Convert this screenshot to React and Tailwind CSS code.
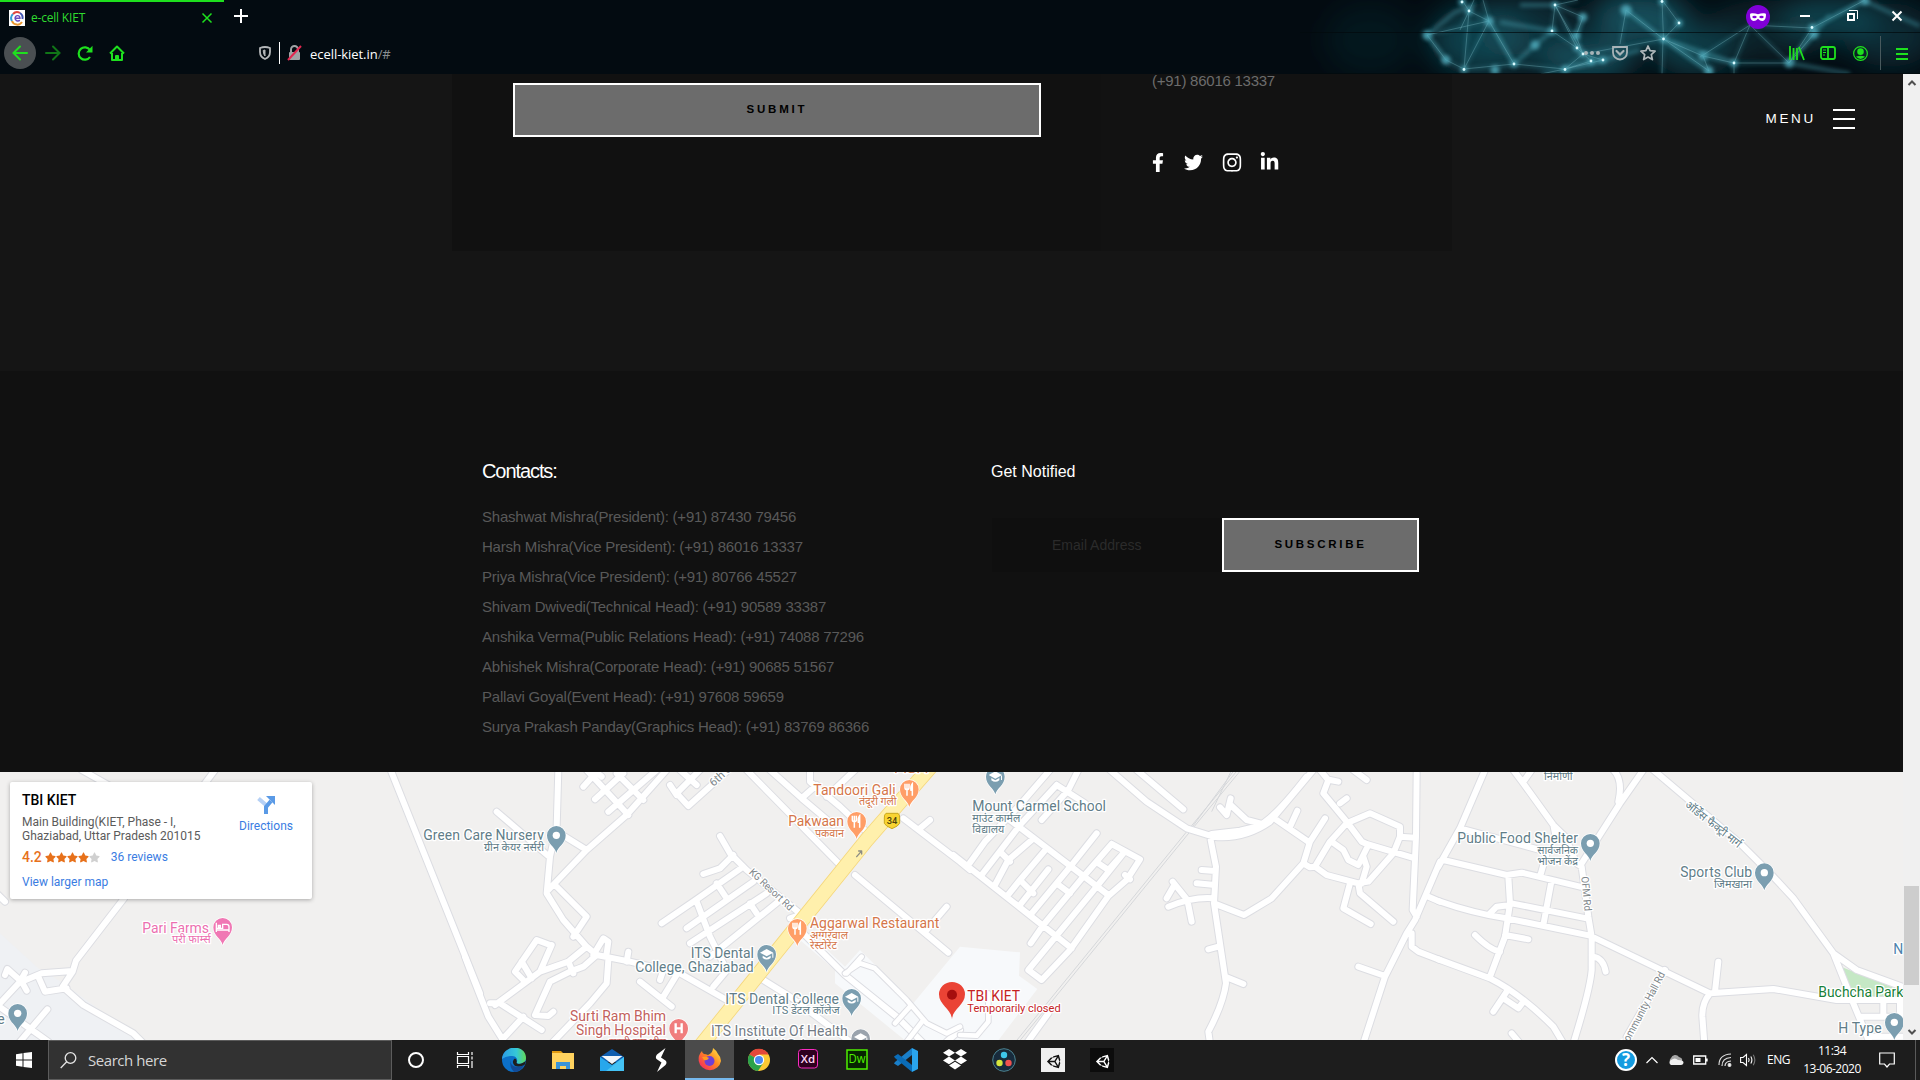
import React from "react";
import { FaFacebookF, FaTwitter, FaInstagram, FaLinkedinIn, FaUnity, FaStar } from "react-icons/fa";

/* ---------- Browser chrome ---------- */

const NODES = [
  [62, 2, 2], [69, 11, 2], [89, 21, 3], [27, 35, 3], [46, 60, 3], [64, 69.5, 2], [114, 64, 2], [95, 70, 3], [155, 5, 2],
  [152, 31, 2.4], [177, 48, 2], [183, 54, 2], [191, 61, 2], [165, 69.5, 2.4], [203, 60, 2], [226, 10, 4], [262, 1.5, 2], [279, 23, 2],
  [263.5, 39, 2], [309, 71, 3], [303, 56, 3], [334, 63, 2.2], [389, 63, 3], [412, 27.5, 2], [414, 34, 3], [465, 1, 2.8], [135, 45, 3], [183, 17, 2.8], [176, 36, 2.8],
];
const LINES =
  "M62 0L69 11L64 69M83 0L89 21L27 35L46 60L64 69L89 21L114 64M69 11L89 21M114 64L64 69M114 64L165 69L203 60M155 5L178 0M155 5L177 48L183 54L203 60M155 5L183 54M152 31L177 48L191 61L165 69M152 31L155 5M176 36L183 54M262 0L263.5 39L226 10L220 44M263.5 39L279 23L262 0M263.5 39L183 54M263.5 39L309 71L303 56L334 63L389 63L412 28L350 25L300 57M334 63L350 25L389 63M334 63L334 74M412 28L465 0M263.5 39L303 56M183 54L165 69M165 69L141 74M69 11L60 30M69 11L74 0M155 5L183 17L176 36M263 39L262 74M389 63L414 34";
const GLOW_LINES =
  "M27 35L55 12L75 5M46 60L27 35M89 21L114 64M100 22L152 31M114 64L135 45L152 31M263.5 39L309 71M263.5 39L334 63M412 28L465 0M389 63L414 34L430 15M465 1L520 26M389 63L450 74M226 10L263 39M165 69L203 60L240 50M120 5L155 5M183 17L176 36";

function NetworkTheme() {
  return (
    <svg className="absolute right-0 top-0 h-[74px] w-[620px]" viewBox="-100 0 620 74" preserveAspectRatio="none">
      <defs>
        <filter id="b1" x="-100%" y="-100%" width="300%" height="300%"><feGaussianBlur stdDeviation="14" /></filter>
        <filter id="b2" x="-50%" y="-50%" width="200%" height="200%"><feGaussianBlur stdDeviation="2.2" /></filter>
      </defs>
      <g filter="url(#b1)" fill="#175a68">
        <ellipse cx="80" cy="40" rx="50" ry="36" opacity=".65" />
        <ellipse cx="130" cy="30" rx="50" ry="36" opacity=".4" />
        <ellipse cx="185" cy="60" rx="50" ry="20" opacity=".85" />
        <ellipse cx="240" cy="18" rx="50" ry="26" opacity=".85" />
        <ellipse cx="295" cy="50" rx="40" ry="26" opacity=".6" />
        <ellipse cx="365" cy="30" rx="60" ry="30" opacity=".3" />
        <ellipse cx="430" cy="18" rx="50" ry="22" opacity=".65" />
        <ellipse cx="490" cy="35" rx="45" ry="32" opacity=".4" />
        <ellipse cx="-30" cy="40" rx="45" ry="36" opacity=".15" />
      </g>
      <path d={LINES} fill="none" stroke="#3d95a5" strokeWidth="3" opacity=".35" filter="url(#b2)" />
      <path d={GLOW_LINES} fill="none" stroke="#4aa6b6" strokeWidth="4" opacity=".45" filter="url(#b2)" />
      <path d={LINES} fill="none" stroke="#8fd0da" strokeWidth=".6" opacity=".5" />
      <g fill="#4fa9ba" filter="url(#b2)" opacity=".85">
        {NODES.map(([x, y, r], i) => <circle key={i} cx={x} cy={y} r={r + 1.5} />)}
      </g>
      <g fill="#d9fbff">
        {NODES.filter((n) => n[2] < 2.6).map(([x, y], i) => <circle key={i} cx={x} cy={y} r="1.4" />)}
      </g>
      <path d="M-100 32.5H520M-100 73.5H520" stroke="#020a0d" opacity=".7" />
    </svg>
  );
}

function TabStrip() {
  return (
    <div className="relative flex h-8 items-stretch">
      <div className="flex w-56 items-center border-t-2 border-[#1ee01e] pb-px pl-[9px] pr-[11px]">
        <svg className="mt-[3px] h-4 w-4 bg-white" viewBox="0 0 16 16" fill="none" strokeWidth="2">
          <path d="M3 11A5.6 5.6 0 0 1 4 4" stroke="#2f9fd8" />
          <path d="M4 4A5.6 5.6 0 0 1 11 3" stroke="#e0463c" />
          <path d="M11 3A5.6 5.6 0 0 1 13.4 9" stroke="#3f54b5" />
          <path d="M3 11A5.6 5.6 0 0 0 13 12" stroke="#e8962e" />
          <path d="M6 8.200h5C11 5 6.600 4.500 6 8C6 11 9 11.500 11 10.400" stroke="#6a4cc0" strokeWidth="1.400" />
        </svg>
        <span className="ml-[6px] mt-[2px] flex-1 font-['Open_Sans',sans-serif] text-[12px] tracking-[-0.2px] text-[#2fdc2f]">e-cell KIET</span>
        <svg className="mt-[2px] h-3 w-3" viewBox="0 0 12 12" stroke="#1ee01e" strokeWidth="1.500"><path d="M1.500 1.500l9 9M10.500 1.500l-9 9" /></svg>
      </div>
      <div className="flex w-[34px] items-center justify-center">
        <svg className="h-[14px] w-[14px]" viewBox="0 0 14 14" stroke="#fff" strokeWidth="2"><path d="M7 0v14M0 7h14" /></svg>
      </div>
      <div className="flex-1" />
      <div className="flex items-center">
        <svg className="mt-[2px] h-6 w-6" viewBox="0 0 24 24">
          <circle cx="12" cy="12" r="12" fill="#8000d7" />
          <path d="M4 9.500Q4 8.300 6 8.200Q9 8 12 9.300Q15 8 18 8.200Q20 8.300 20 9.500Q20 16 16.300 16Q14 16 12 13.800Q10 16 7.700 16Q4 16 4 9.500Z" fill="#fff" />
          <ellipse cx="8.500" cy="12" rx="2.200" ry="1.300" fill="#8000d7" /><ellipse cx="15.500" cy="12" rx="2.200" ry="1.300" fill="#8000d7" />
        </svg>
        <div className="flex w-[70px] justify-center"><div className="h-[2px] w-[10px] bg-white" /></div>
        <svg className="ml-[6px] h-3 w-3" viewBox="0 0 12 12" fill="none" stroke="#fff"><path d="M3 .5H11.500V9" /><path d="M2 4h6v6H2z" strokeWidth="2" /></svg>
        <svg className="ml-[33px] mr-[17px] h-3 w-3" viewBox="0 0 12 12" stroke="#fff" strokeWidth="2"><path d="M1.500 1.500l9 9M10.500 1.500l-9 9" /></svg>
      </div>
    </div>
  );
}

function NavBar() {
  const g = "#1ee01e";
  return (
    <div className="relative flex h-[42px] items-center">
      <div className="ml-1 flex h-8 w-8 items-center justify-center rounded-full bg-[#4a4f52]">
        <svg className="h-4 w-4" viewBox="0 0 16 16" fill="none" stroke={g} strokeWidth="2" strokeLinecap="round"><path d="M15 8H1.500M8 1.500L1.500 8L8 14.500" /></svg>
      </div>
      <svg className="ml-[9px] h-4 w-4 opacity-50" viewBox="0 0 16 16" fill="none" stroke={g} strokeWidth="2" strokeLinecap="round"><path d="M1 8h13.500M8 1.500L14.500 8L8 14.500" /></svg>
      <svg className="ml-4 h-4 w-4" viewBox="0 0 16 16" fill="none" stroke={g} strokeWidth="2.200"><path d="M13 12A6.200 6.200 0 1 1 13 5" /><path d="M15.500 .8V7.500H9z" fill={g} stroke="none" /></svg>
      <svg className="ml-4 h-4 w-4" viewBox="0 0 16 16" fill="none" stroke={g} strokeWidth="2" strokeLinejoin="round"><path d="M1 8.500L8 1.500L15 8.500M3 8v7h10V8" /><path d="M7 15v-4h2v4z" /></svg>
      <svg className="ml-[134px] h-[14px] w-3" viewBox="0 0 12 14" fill="none" stroke="#b4b7b9" strokeWidth="1.800"><path d="M1 2Q6 0 11 2V6Q11 11 6 13Q1 11 1 6Z" /><path d="M6 4v6Q4.200 8 4.200 4.500Z" fill="#b4b7b9" strokeWidth="1" /></svg>
      <div className="ml-[8px] h-[22px] w-px bg-white" />
      <svg className="ml-[7px] h-4 w-[15px]" viewBox="0 0 15 16"><path d="M4 8V4.500a3.500 3.500 0 0 1 7 0V8" fill="none" stroke="#a0a3a5" strokeWidth="2" /><rect x="2" y="7" width="11" height="8" rx="1" fill="#a0a3a5" /><path d="M1 15L14 1" stroke="#e22850" strokeWidth="2" /></svg>
      <span className="ml-[8px] mt-[3px] font-['Open_Sans',sans-serif] text-[13px] tracking-[-0.05px] text-white">ecell-kiet.in<span className="text-[#8a8f91]">/#</span></span>
      <div className="flex-1" />
      <svg className="h-4 w-[18px]" viewBox="0 0 18 16" fill="#a8b4b8"><circle cx="3" cy="8" r="2" /><circle cx="9" cy="8" r="2" /><circle cx="15" cy="8" r="2" /></svg>
      <svg className="ml-[11px] h-4 w-4" viewBox="0 0 16 16" fill="none" stroke="#a8b4b8" strokeWidth="1.800"><path d="M1 2h14v5.500a7 7 0 0 1-14 0z" /><path d="M4.500 6L8 9.500L11.500 6" strokeWidth="2.200" strokeLinecap="round" /></svg>
      <svg className="ml-3 h-4 w-4" viewBox="0 0 16 16" fill="none" stroke="#b0b8bb" strokeWidth="1.700" strokeLinejoin="round"><path d="M8 1l2.100 4.700 5 .5-3.800 3.400 1.100 5L8 12.100l-4.400 2.500 1.100-5L.9 6.200l5-.5z" /></svg>
      <svg className="ml-[133px] h-4 w-4" viewBox="0 0 16 16" stroke={g} strokeWidth="1.800"><path d="M1 1v14M4.500 3v12M8 3v12M10 2l5 13" /></svg>
      <svg className="ml-[15px] h-4 w-4" viewBox="0 0 16 16" fill="none" stroke={g} strokeWidth="1.800"><rect x="1" y="2" width="14" height="12" rx="2" /><path d="M8 2v12" /><path d="M3 5h3M3 7.500h3M3 10h2" strokeWidth="1" /></svg>
      <svg className="ml-[17px] h-[15px] w-[15px]" viewBox="0 0 16 16"><circle cx="8" cy="8" r="7.300" fill="none" stroke={g} strokeWidth="1.300" /><circle cx="8" cy="6" r="3.500" fill={g} /><path d="M3 11.500Q8 9.500 13 11.500Q8 16 3 11.500Z" fill={g} /></svg>
      <div className="ml-[12px] h-[34px] w-px bg-[#48595d]" />
      <svg className="ml-[15px] mr-[12px] h-[13px] w-[12px]" viewBox="0 0 12 13" stroke={g} strokeWidth="2"><path d="M0 2h12M0 7h12M0 12h12" /></svg>
    </div>
  );
}

/* ---------- Page ---------- */

function ContactCard() {
  return (
    <section className="relative h-[297px] bg-[#151515]">
      <div className="ml-[452px] flex h-[177px] w-[1000px] overflow-hidden font-['Liberation_Sans',Arial,sans-serif]">
        <div className="w-[649px] bg-[#111111] pl-[61px] pt-[9px]">
          <button className="block h-[54px] w-[528px] border-2 border-white bg-[#6c6c6c] text-center text-[11.5px] font-bold tracking-[2.8px] text-black">SUBMIT</button>
        </div>
        <div className="flex-1 bg-[#121212] pl-[51px]">
          <p className="-mt-[8px] text-[15px] leading-[30px] tracking-[-0.25px] text-[#6c6c6c]">(+91) 86016 13337</p>
          <div className="mt-[56px] flex h-[20px] items-center text-white">
            <FaFacebookF className="h-[19px] w-[12px]" />
            <FaTwitter className="ml-[20px] h-[19px] w-[19px]" />
            <FaInstagram className="ml-[19px] h-[21px] w-[20px]" />
            <FaLinkedinIn className="ml-[18px] h-[20px] w-[19px]" />
          </div>
        </div>
      </div>
      <div className="absolute right-[48px] top-[35px] flex items-center gap-[17px]">
        <span className="font-['Liberation_Sans',Arial,sans-serif] text-[13.500px] leading-[20px] tracking-[2.700px] text-white">MENU</span>
        <div className="flex flex-col gap-[7px]"><i className="h-[2px] w-[22px] bg-white" /><i className="h-[2px] w-[22px] bg-white" /><i className="h-[2px] w-[22px] bg-white" /></div>
      </div>
    </section>
  );
}

const CONTACTS = [
  "Shashwat Mishra(President): (+91) 87430 79456",
  "Harsh Mishra(Vice President): (+91) 86016 13337",
  "Priya Mishra(Vice President): (+91) 80766 45527",
  "Shivam Dwivedi(Technical Head): (+91) 90589 33387",
  "Anshika Verma(Public Relations Head): (+91) 74088 77296",
  "Abhishek Mishra(Corporate Head): (+91) 90685 51567",
  "Pallavi Goyal(Event Head): (+91) 97608 59659",
  "Surya Prakash Panday(Graphics Head): (+91) 83769 86366",
];

function Footer() {
  return (
    <footer className="flex h-[401px] bg-[#111111] pl-[482px] pt-[85px] font-['Liberation_Sans',Arial,sans-serif]">
      <div className="w-[509px]">
        <h3 className="text-[20px] leading-[30px] tracking-[-1.080px] text-white">Contacts:</h3>
        <ul className="mt-[16px] text-[15px] leading-[30px] tracking-[-0.22px] text-[#595959]">
          {CONTACTS.map((c) => <li key={c}>{c}</li>)}
        </ul>
      </div>
      <div>
        <h4 className="pt-px text-[16px] leading-[30px] text-white">Get Notified</h4>
        <div className="mt-[31px] flex pl-px">
          <div className="h-[54px] w-[230px] bg-[#0f0f0f] pl-[60px] text-[14px] leading-[54px] text-[#2b2b2b]">Email Address</div>
          <button className="h-[54px] w-[197px] border-2 border-white bg-[#6c6c6c] text-[11.5px] font-bold tracking-[2.700px] text-black">SUBSCRIBE</button>
        </div>
      </div>
    </footer>
  );
}

/* ---------- Map (road geometry is in 1/3 px units, one list per 480px tile) ---------- */

const ROADS = [
  "M245 0L325 45M645 0L600 60M-10 370L15 395M372 385L228 572L218 605L188 650L250 705L400 790L430 820M65 635L125 610L218 603M115 620L135 665L200 655M15 615L22 597L65 635L80 662M75 608L60 635L0 700M-5 708L145 815M142 718L60 815M1172 0L1440 670",
  "M-45 560L-30 600L25 740L75 820M235 0L230 170L210 260L200 370L250 450L320 530L350 555L450 575L600 610L740 690M50 125L205 258M255 200L320 240M560 0L440 135L320 240L205 360M225 345L320 440L280 500M250 450L320 530M320 0L445 135M310 50L355 0M345 88L430 10M385 125L530 0M410 10L490 90M365 20L335 -5M590 70L625 108L745 0M590 70L660 0M570 45L590 75M600 0L650 45M800 0L1085 290M1125 315L1405 548M1340 480L1400 410M870 0L965 85L1060 165M990 0L990 35L1080 110L1165 190M965 85L1010 45M1040 80L1125 0M1270 145L1440 275L1470 300M1320 175L1350 150M720 198L750 250L800 300L960 430M930 445L960 435M970 490L1095 615L1250 740L1330 820M760 255L720 295L670 312M545 460L640 395L790 290M620 475L820 335M630 520L860 370M690 560L895 395M650 395L690 500L735 590M710 340L740 385M810 400L830 430M480 635L575 710M550 680L590 615M540 630L550 600M445 545L440 575M850 630L930 680L1050 770L1110 815M700 650L750 590M350 555L310 590L270 605L210 635L165 735L205 738L220 725M320 530L265 575L180 605L45 705M210 525L170 510L105 605L130 630M125 575L155 625M180 605L215 525M265 575L280 610M340 555L370 505L385 515L380 550M385 570L380 640L330 700L220 815M30 700L60 700L185 780M130 740L70 805M1400 815L1440 780",
  "M-20 255L335 535M270 0L175 110L75 215L25 285M355 0L325 60L245 150M290 45L180 165L65 315M290 45L375 100M150 150L445 375M215 210L145 270L105 345M120 245L150 275M260 235L180 330L140 380M265 298L180 405M180 330L220 370M410 190L335 285L215 430M290 340L330 370M455 222L370 320L250 465L212 520M455 222L540 268L500 330L445 378L330 540L245 630L205 600L410 350L490 250M490 250L445 300L415 280M510 328L495 315M450 0L560 95L680 175L760 200Q850 210 930 155L1060 0M755 192L840 182L890 170Q940 150 1040 20M530 0L670 118M780 112L800 135L812 85M812 105L860 150L900 160M752 210L768 290L762 400L780 520L798 640Q790 700 745 785L750 820M725 300L765 303M710 340L765 345M625 410Q700 380 760 385M620 385L640 350M638 335L682 390L695 455M762 400L852 435L935 385L1030 280L1050 215L1095 145M950 150L1045 215M990 170L1012 122M1030 280L1050 292L1065 290L1110 215L1160 160L1230 130L1320 170L1320 200L1365 203M1320 200L1300 250L1225 335L1195 340L1100 315L1065 290M1195 340L1200 370L1300 455M1170 340L1150 415L1232 462M1080 0L1105 30L1090 70L1160 155L1205 215L1220 222L1365 265M1110 30L1135 35M1140 100L1160 85M1115 215L1150 240L1165 270L1195 285L1225 225L1205 215M1210 260L1220 290L1205 340M1370 10L1368 200L1358 420L1370 440M1440 275L1365 450L1340 490L1275 620L1210 820M1355 490L1355 530L1375 545L1440 570M1405 380L1440 395M1195 590L1275 618M745 538L775 530M800 622L850 642M1180 0L1220 30M200 820L265 730",
  "M135 0L60 175L-5 290M60 175L300 240M10 270L200 315L245 308L420 350M220 0L250 40L340 165L375 200L410 280L425 290L445 440L455 500L455 600Q450 660 400 820M275 0L250 35M340 165L345 190M320 250L300 320M335 330L310 465M205 320L210 400L195 500L150 620M-5 393Q100 430 200 445L450 497L810 670L1000 657L1190 690L1390 690M150 430L170 410L210 405M215 400L440 445M105 495Q150 540 180 545M195 495L265 508M-5 568L150 625Q240 670 340 770L370 820M200 665L160 725M190 685L235 715L250 695M215 790L240 820M460 560Q490 565 497 605M610 0L540 100L425 280M520 0Q550 30 535 95M640 0L900 220L1000 320L1060 385L1180 550L1250 600L1400 655M1180 550L1240 700L1290 820M835 575L825 665M810 670Q785 700 787 740L793 820M1260 740L1400 740M1330 700V740M1380 700V740M1285 800H1400M675 600L560 800",
];
const CAMPUS_ROADS = "M1095 610L1140 580L1185 595L1280 690L1340 760L1400 790L1440 770M1440 795L1490 797L1525 755L1525 670M1290 710L1245 760M1330 750L1280 815M1145 560L1100 610";

function Tile({ i, children }) {
  return <g transform={`translate(${480 * i} -2) scale(.33333)`}>{children}</g>;
}

const C = { label: "#617d88", road: "#7d8589", food: "#d5764a", pink: "#ec6fb0", red: "#c2615c", inst: "#737b85" };

function Label({ x, y, w, c = C.label, s = 42, rotate, children }) {
  return (
    <text x={x} y={y + 1} fill={c} fontSize={s} textLength={w} lengthAdjust={s < 40 ? "spacingAndGlyphs" : "spacing"}
      transform={rotate ? `rotate(${rotate} ${x} ${y})` : undefined}
      stroke="#fff" strokeWidth="8" strokeLinejoin="round" paintOrder="stroke">{children}</text>
  );
}

function Pin({ x, y, c = "#7b9eb0", kind = "dot" }) {
  return (
    <g transform={`translate(${x} ${y})`}>
      <path d="M0 27C-4 8-28 0-28-26A28 28 0 0 1 28-26C28 0 4 8 0 27Z" fill={c} stroke="#fff" strokeWidth="4" paintOrder="stroke" transform="translate(0 26)" />
      {kind === "dot" && <circle r="11" fill="#fff" />}
      {kind === "food" && <path d="M-13-17V-5Q-13 1-7 1V19M-7-17V0M-1-17V-5Q-1 1-7 1M9 19V-17Q3-10 5 3H9" fill="none" stroke="#fff" strokeWidth="4.500" />}
      {kind === "school" && <path d="M0-16L20-5L0 6L-20-5ZM-12 4V11Q0 20 12 11V4L0 11ZM17-3H20V10H17Z" fill="#fff" />}
      {kind === "bed" && <path d="M-19-14V14M-19 8H19M19 14V-2Q19-9 12-9H0V3H-19M-13-6h6v5h-6z" fill="none" stroke="#fff" strokeWidth="4" />}
      {kind === "h" && <path d="M-9-15V15M9-15V15M-9 0H9" stroke="#fff" strokeWidth="7" />}
    </g>
  );
}

function MapCard() {
  return (
    <div className="absolute left-[10px] top-[10px] flex h-[117px] w-[302px] rounded-[2px] bg-white pl-3 pt-[9px] font-[Roboto,sans-serif] text-[12px] text-[#5b5b5b] shadow-[0_1px_4px_rgba(0,0,0,0.3)]">
      <div className="w-[217px]">
        <div className="text-[14px] font-medium leading-[18px] text-black">TBI KIET</div>
        <div className="mt-[6px] leading-[14px]">Main Building(KIET, Phase - I,<br />Ghaziabad, Uttar Pradesh 201015</div>
        <div className="mt-[6px] flex items-center leading-[16px]">
          <span className="text-[14px] font-medium text-[#e7711b]">4.2</span>
          <span className="ml-[3px] flex text-[11px] text-[#e7711b]"><FaStar /><FaStar /><FaStar /><FaStar /><FaStar className="text-[#d0d0d0]" /></span>
          <span className="ml-[11px] text-[#3a7ce2]">36 reviews</span>
        </div>
        <div className="mt-[9px] leading-[16px] text-[#3a7ce2]">View larger map</div>
      </div>
      <div className="flex w-[54px] flex-col items-center">
        <svg className="mt-[5px] h-[18px] w-[18px]" viewBox="0 0 18 18" fill="none"><path d="M1.500 2.500L9 9" stroke="#b5d0f5" strokeWidth="4" /><path d="M9 18V11L14 5" stroke="#5a9ae6" strokeWidth="4" /><path d="M9 0h9v9z" fill="#5a9ae6" /></svg>
        <span className="mt-[4px] leading-[16px] text-[#3a7ce2]">Directions</span>
      </div>
    </div>
  );
}

function MapView() {
  return (
    <section className="relative h-[268px] overflow-hidden bg-[#f1f0ef]">
      <svg className="block h-[268px] w-[1903px] font-[Roboto,'Noto_Sans',sans-serif]" viewBox="0 0 1903 268">
        <Tile i={0}><path d="M0 490L115 595L190 640L430 815H0Z" fill="#eff1f4" /></Tile>
        <Tile i={1}><path d="M960 510L1065 600V640L1280 815H1552L1672 657L1617 617L1620 547L1440 530L1300 700L1140 540L1095 590L1000 500Z" fill="#f7f9fb" /></Tile>
        <Tile i={3}><path d="M1203 590L1390 665V690H1240Z" fill="#c5e8c5" /></Tile>
        <Tile i={2}><path d="M833 0L680 185L167 815M843 0L690 185L177 815M815 0L755 125M823 0L690 180" stroke="#d5d7da" strokeWidth="3" fill="none" /></Tile>
        <g fill="none" strokeLinejoin="round" strokeLinecap="round">
          <g stroke="#dcdde2" strokeWidth="24">{ROADS.map((d, i) => <Tile key={i} i={i}><path d={d} /></Tile>)}</g>
          <g stroke="#fff" strokeWidth="18">{ROADS.map((d, i) => <Tile key={i} i={i}><path d={d} /></Tile>)}</g>
          <Tile i={1}>
            <path d={CAMPUS_ROADS} stroke="#dcdde2" strokeWidth="20" /><path d={CAMPUS_ROADS} stroke="#fff" strokeWidth="14" />
            <path d="M1352 -10L1160 210L660 830" stroke="#f5d77c" strokeWidth="46" /><path d="M1352 -10L1160 210L660 830" stroke="#fff0ac" strokeWidth="41" />
            <path d="M1130 260L1144 244M1136 243H1145V252" stroke="#8c8c84" strokeWidth="4" />
          </Tile>
        </g>
        <Tile i={0}>
          <Label x={427} y={487} w={200} c={C.pink}>Pari Farms</Label><Label x={516} y={517} w={116} s={32} c={C.pink}>परी फार्म्स</Label>
          <Pin x={668} y={472} c="#f078b4" kind="bed" />
          <Label x={-8} y={760}>e</Label><Pin x={53} y={730} />
          <Label x={1270} y={208} w={362}>Green Care Nursery</Label><Label x={1452} y={241} w={180} s={32}>ग्रीन केयर नर्सरी</Label>
        </Tile>
        <Tile i={1}>
          <Pin x={229} y={196} />
          <Label x={700} y={50} s={34} rotate={-42} c={C.road}>6th St</Label>
          <Label x={1242} y={8} w={104} s={32} c={C.food}>मिष्ठान</Label>
          <Label x={1000} y={73} w={247} c={C.food}>Tandoori Gali</Label><Label x={1137} y={104} w={113} s={32} c={C.food}>तंदूरी गली</Label>
          <Pin x={1288} y={58} c="#ff9e67" kind="food" />
          <Label x={925} y={166} w={167} c={C.food}>Pakwaan</Label><Label x={1005} y={199} w={87} s={32} c={C.food}>पकवान</Label>
          <Pin x={1130} y={154} c="#ff9e67" kind="food" />
          <path d="M1218 130H1254Q1260 134 1259 144V160Q1256 168 1236 176Q1216 168 1213 160V144Q1212 134 1218 130Z" fill="#f9d432" stroke="#c9a71c" strokeWidth="3" />
          <text x="1236" y="163" fontSize="28" fontWeight="500" textAnchor="middle" fill="#50440c">34</text>
          <Label x={806} y={308} w={168} s={31} rotate={43} c={C.road}>KG Resort Rd</Label>
          <Label x={990} y={472} w={388} c={C.food}>Aggarwal Restaurant</Label><Label x={990} y={505} w={114} s={32} c={C.food}>अग्गरवाल</Label><Label x={990} y={537} w={81} s={32} c={C.food}>रेस्टोरेंट</Label>
          <Pin x={952} y={475} c="#ff9e67" kind="food" />
          <Label x={632} y={562} w={190}>ITS Dental</Label><Label x={466} y={604} w={355}>College, Ghaziabad</Label><Pin x={860} y={553} kind="school" />
          <Label x={736} y={700} w={341}>ITS Dental College</Label><Label x={877} y={731} w={202} s={32}>ITS डेंटल कॉलेज</Label><Pin x={1115} y={685} kind="school" />
          <Label x={270} y={751} w={288} c={C.red}>Surti Ram Bhim</Label><Label x={288} y={793} w={270} c={C.red}>Singh Hospital</Label><Label x={388} y={826} w={170} s={32} c={C.red}>सुरती राम भीम</Label>
          <Pin x={596} y={775} c="#f07d7d" kind="h" />
          <Label x={693} y={796} w={410} c={C.inst}>ITS Institute Of Health</Label><Label x={785} y={838} w={232} c={C.inst}>&amp; Allied Scien</Label>
          <Pin x={1142} y={806} c="#9aa3ad" kind="school" />
          <path d="M1416 748C1414 716 1377 706 1377 673A39 37 0 0 1 1455 673C1455 706 1418 716 1416 748Z" fill="#ea4335" /><circle cx="1416" cy="674" r="15" fill="#a50e0e" />
        </Tile>
        <Tile i={2}>
          <Pin x={106} y={20} kind="school" />
          <Label x={37} y={121} w={401}>Mount Carmel School</Label><Label x={37} y={155} w={144} s={32}>माउंट कार्मल</Label><Label x={37} y={187} w={96} s={32}>विद्यालय</Label>
          <Label x={22} y={693} w={158} c="#c5221f">TBI KIET</Label><Label x={22} y={725} w={280} s={34} c="#c5221f">Temporarily closed</Label>
        </Tile>
        <Tile i={3}>
          <Label x={312} y={30} w={86} s={32}>निर्माणी</Label>
          <Label x={52} y={217} w={362}>Public Food Shelter</Label><Label x={292} y={250} w={122} s={32}>सार्वजनिक</Label><Label x={292} y={283} w={122} s={32}>भोजन केंद्र</Label><Pin x={451} y={220} />
          <Label x={425} y={320} w={104} s={31} rotate={85} c={C.road}>OFM Rd</Label>
          <Label x={733} y={108} w={205} s={34} rotate={38}>ऑर्डेंस फैक्ट्री मार्ग</Label>
          <Label x={721} y={321} w={215}>Sports Club</Label><Label x={822} y={352} w={114} s={32}>जिमखाना</Label><Pin x={973} y={308} />
          <Label x={558} y={833} w={250} s={32} rotate={-62} c={C.road}>Community Hall Rd</Label>
          <Label x={1360} y={552} c="#4d83ad">N</Label><Label x={1135} y={679} w={255} c="#188038">Buchcha Park</Label>
          <Label x={1195} y={787} w={130}>H Type</Label><Pin x={1363} y={757} />
        </Tile>
      </svg>
      <MapCard />
    </section>
  );
}

function Scrollbar() {
  return (
    <div className="flex w-[17px] flex-col items-center bg-[#f0f0f0]">
      <svg className="mt-[4px] h-[10px] w-[10px]" viewBox="0 0 10 10" fill="none" stroke="#505050" strokeWidth="2"><path d="M1.500 7L5 3.500L8.500 7" /></svg>
      <div className="mt-[798px] h-[99px] w-[15px] bg-[#cdcdcd]" />
      <svg className="mt-[42px] h-[10px] w-[10px]" viewBox="0 0 10 10" fill="none" stroke="#505050" strokeWidth="2"><path d="M1.500 3L5 6.500L8.500 3" /></svg>
    </div>
  );
}

/* ---------- Taskbar ---------- */

const APPS = [
  { id: "cortana", art: <circle cx="12" cy="12" r="7" fill="none" stroke="#fff" strokeWidth="2" /> },
  { id: "taskview", art: <path d="M4.500 4v2.500h11V4M4.500 20v-2.500h11V20M4.500 8.500h11v7h-11zM19 4v3M19 13v7M19 8.500v3" fill="none" stroke="#fff" strokeWidth="1.200" /> },
  { id: "edge", art: <g><defs><linearGradient id="eg" x1="0" x2="1"><stop offset="0" stopColor="#2b9be6" /><stop offset=".6" stopColor="#35c8d8" /><stop offset="1" stopColor="#62d957" /></linearGradient></defs><circle cx="12" cy="12" r="12" fill="#0c70c8" /><path d="M0 11C1-4 24-4 24 10C24 15 18 17 14.500 15C16 13 15.500 8.500 10.500 8Q4 7.500 0 11Z" fill="url(#eg)" /><path d="M8.500 12Q8 18 15 19Q19 19 22 17Q19 24 12 24Q7 19 8.500 12Z" fill="#124a96" /><path d="M14.500 15Q17 17.500 24 13L22.500 17Q13 21 11 15Q10.500 12 13 10.500Q15.500 12 14.500 15Z" fill="#1e1e1e" /></g> },
  { id: "explorer", art: <g><path d="M1 3h9l2 2H1z" fill="#e09a12" /><path d="M1 5h22v16H1z" fill="#ffd25e" /><path d="M5 21v-7h14v7h-4v-3H9v3z" fill="#3a94d8" /></g> },
  { id: "mail", art: <g><path d="M0 9L12 1L24 9V14H0z" fill="#0f5eb0" /><path d="M1.500 8h21L12 16z" fill="#f2f6fa" /><path d="M0 9L12 17L24 9V23H0z" fill="#27a7ec" /><path d="M24 9V23H6z" fill="#45c3f5" /></g> },
  { id: "strike", art: <path d="M16.500 0L8 6.500Q6 9 7.500 11L12.500 14.500L8 24L16.500 17Q18.500 14.500 16.500 12.500L12 9.500Z" fill="#fff" /> },
  { id: "firefox", active: true, art: <g><defs><linearGradient id="fx" x1="1" x2="0" y1="0" y2="1"><stop offset="0" stopColor="#fff14f" /><stop offset=".45" stopColor="#ff8a1f" /><stop offset="1" stopColor="#f5156c" /></linearGradient></defs><path d="M15 0Q19 3 20 6Q23 9 23 13A11.300 11 0 0 1 .7 13Q0 7 4 3Q4 5 6 6Q8 6 10 7Q15 5 15 0Z" fill="url(#fx)" /><circle cx="11.500" cy="13" r="5" fill="#6e3fd6" /><path d="M4 9Q8 8 11 10Q9 13 6 12Z" fill="#ff9a1f" /></g> },
  { id: "chrome", art: <g><circle cx="12" cy="12" r="11" fill="#fcc934" /><path d="M12 12L2.400 6.500A11 11 0 0 1 21.600 6.500H12Z" fill="#e3473b" /><path d="M12 12L2.400 6.500A11 11 0 0 0 11 23L16.500 14.500Z" fill="#2ba24c" /><circle cx="12" cy="12" r="5.200" fill="#fff" /><circle cx="12" cy="12" r="4" fill="#4a8af4" /></g> },
  { id: "xd", art: <g><rect x="2.500" y="1.500" width="19" height="18.500" rx="3" fill="#2e001e" stroke="#f72cc0" /><text x="12" y="15" fontSize="11.500" fontWeight="600" textAnchor="middle" fill="#ffd9f5">Xd</text></g> },
  { id: "dw", art: <g><rect x="2" y="2" width="20" height="19" fill="#072401" stroke="#4ff000" strokeWidth="1.500" /><text x="12" y="14.500" fontSize="12" textLength="17" lengthAdjust="spacingAndGlyphs" textAnchor="middle" fill="#4ff000">Dw</text></g> },
  { id: "vscode", art: <g><path d="M18 0L24 3V21L18 24Z" fill="#2aa5ee" /><path d="M18 0V7L4 18L0 15.500L1 14Z" fill="#1a7fc9" /><path d="M18 24V17L4 6L0 8.500L1 10Z" fill="#0a6cb8" /></g> },
  { id: "dropbox", art: <path d="M6 1L12 4.800L6 8.600L0 4.800ZM18 1L24 4.800L18 8.600L12 4.800ZM6 8.600L12 12.400L6 16.200L0 12.400ZM18 8.600L24 12.400L18 16.200L12 12.400ZM12 13.800L18 17.600L12 21.400L6 17.600Z" fill="#fff" /> },
  { id: "resolve", art: <g><circle cx="12" cy="12" r="11.300" fill="#182b3c" stroke="#4b8391" strokeWidth="1" /><circle cx="12" cy="7" r="3.200" fill="#3ec6ec" /><circle cx="7.500" cy="15" r="3.200" fill="#d5e63c" /><circle cx="16.500" cy="15" r="3.200" fill="#f0524f" /></g> },
  { id: "unity", art: <g><path d="M0 0h24v24H0z" fill="#f0f0f0" /><FaUnity x="5.500" y="5.500" width="13" height="13" color="#111" /></g> },
  { id: "unityhub", art: <g><path d="M0 0h24v24H0z" fill="#0c0c0c" /><FaUnity x="5.500" y="5.500" width="13" height="13" color="#fff" /></g> },
];

function Taskbar() {
  return (
    <div className="flex h-10 items-center bg-[#1d1d1d] font-['Open_Sans',sans-serif] text-white">
      <div className="flex w-12 justify-center">
        <svg className="h-4 w-4" viewBox="0 0 16 16" fill="#fff"><path d="M0 2.200L6.500 1.300V7.500H0zM7.500 1.100L16 0V7.500H7.500zM0 8.500H6.500V14.700L0 13.800zM7.500 8.500H16V16L7.500 14.900z" /></svg>
      </div>
      <div className="flex h-full w-[344px] items-center border border-[#5c5c5c] bg-[#323232] pl-[11px]">
        <svg className="h-[17px] w-[17px]" viewBox="0 0 17 17" fill="none" stroke="#e5e5e5" strokeWidth="1.300"><circle cx="10.500" cy="6" r="5.300" /><path d="M6.700 9.800L.7 16" /></svg>
        <span className="ml-[11px] text-[15px] tracking-[-0.45px] text-[#d6d6d6]">Search here</span>
      </div>
      <div className="-ml-px flex h-full">
        {APPS.map((a) => (
          <div key={a.id} className={a.active ? "flex w-[49px] justify-center border-b-2 border-[#76b9ed] bg-[#4b4b4b] pt-2" : "flex w-[49px] justify-center pt-2"}>
            <svg className="ml-px h-6 w-6" viewBox="0 0 24 24">{a.art}</svg>
          </div>
        ))}
      </div>
      <div className="flex-1" />
      <svg className="h-[22px] w-[22px]" viewBox="0 0 22 22"><circle cx="11" cy="11" r="10" fill="#149be0" stroke="#fff" strokeWidth="2" /><text x="11" y="17" fontSize="17" fontWeight="700" textAnchor="middle" fill="#fff">?</text></svg>
      <svg className="ml-[9px] h-3 w-3" viewBox="0 0 12 12" fill="none" stroke="#fff" strokeWidth="1.200"><path d="M.5 9L6 3.500L11.500 9" /></svg>
      <svg className="ml-[10px] h-4 w-4" viewBox="0 0 16 16"><path d="M4 12A3.500 3.500 0 0 1 3 6A4.500 4.500 0 0 1 11 5Q15 6 14 9Z" fill="#a5a5a5" /><path d="M3 13A2.800 2.800 0 0 1 3 8Q7 5 10 8Q16 8 15.500 11Q15 13 13 13Z" fill="#f0f0f0" /></svg>
      <svg className="ml-[9px] h-3 w-[15px]" viewBox="0 0 15 12"><path d="M.7 2h12v8H.7zM14 4.500v3" fill="none" stroke="#fff" strokeWidth="1.300" /><path d="M2.500 4h5v4h-5z" fill="#fff" /></svg>
      <svg className="ml-[10px] h-4 w-[14px]" viewBox="0 0 14 14" fill="none" stroke="#ddd" strokeWidth="1.200"><path d="M1 12Q1 1.500 13 1M4 13Q4 5 13 4.500M7 13Q7 8.500 13 8" /><circle cx="11.500" cy="12" r="1.400" fill="#fff" /></svg>
      <svg className="ml-2 h-[14px] w-4" viewBox="0 0 16 14" fill="none" stroke="#fff" strokeWidth="1.100"><path d="M.6 4.500H3L6.500 1.500V12.500L3 9.500H.6z" /><path d="M8.500 5Q9.800 7 8.500 9M10.800 3.500Q13 7 10.800 10.500" /><path d="M13.200 1.800Q16.500 7 13.200 12.200" stroke="#777" /></svg>
      <span className="ml-[11px] w-[23px] text-[12px] tracking-[-0.5px]">ENG</span>
      <div className="ml-[11px] flex w-[62px] flex-col items-center whitespace-nowrap text-[12px] leading-[18px] tracking-[-0.5px]"><span>11:34</span><span>13-06-2020</span></div>
      <svg className="ml-[16px] mr-[20px] h-4 w-4" viewBox="0 0 16 16" fill="none" stroke="#fff" strokeWidth="1.200"><path d="M.7 1h14.600v11H10.500L8 15L5.500 12H.7z" /></svg>
      <div className="mr-1 h-full w-px bg-[#5a5a5a]" />
    </div>
  );
}

export default function App() {
  return (
    <div className="flex h-[1080px] w-[1920px] flex-col overflow-hidden">
      <header className="relative h-[74px] bg-[#030b11]">
        <NetworkTheme />
        <TabStrip />
        <NavBar />
      </header>
      <div className="flex h-[966px]">
        <main className="w-[1903px]"><ContactCard /><Footer /><MapView /></main>
        <Scrollbar />
      </div>
      <Taskbar />
    </div>
  );
}
